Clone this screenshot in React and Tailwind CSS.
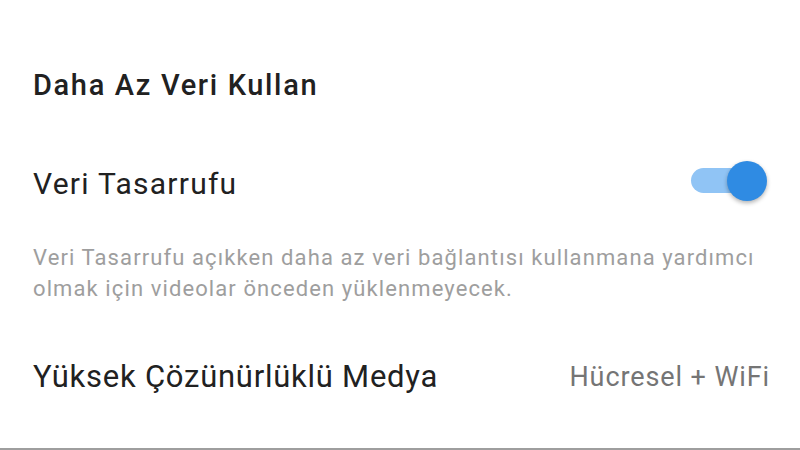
export default function App() {
  return (
    <div className="w-[800px] h-[450px] bg-white overflow-hidden flex flex-col" style={{ fontFamily: 'Roboto, "Noto Sans", sans-serif' }}>
      <div className="pl-[33px] pt-[69px] h-[101px] text-[29px] leading-[32px] font-medium tracking-[1.65px] text-[#212121]">Daha Az Veri Kullan</div>
      <div className="mt-[59px] h-[48px] pl-[33px] pr-[33px] flex items-center justify-between">
        <span className="text-[30px] leading-[32px] tracking-[1.25px] text-[#212121]">Veri Tasarrufu</span>
        <div className="relative w-[76px] h-[44px] mb-[7px] flex items-center">
          <div className="w-[56px] h-[25px] rounded-full bg-[#90c4f5]"></div>
          <div className="absolute right-0 top-[2px] w-[40px] h-[40px] rounded-full bg-[#2f8be3] shadow-[0_2px_4px_rgba(0,0,0,0.3)]"></div>
        </div>
      </div>
      <div className="mt-[34px] pl-[33px] pr-[10px] text-[22px] leading-[31px] tracking-[1.1px] text-[#9e9e9e] whitespace-nowrap">
        Veri Tasarrufu açıkken daha az veri bağlantısı kullanmana yardımcı<br />olmak için videolar önceden yüklenmeyecek.
      </div>
      <div className="mt-[49px] h-[48px] pl-[33px] pr-[30px] flex items-center justify-between">
        <span className="text-[31px] leading-[32px] tracking-[0.75px] text-[#212121]">Yüksek Çözünürlüklü Medya</span>
        <span className="text-[27px] leading-[32px] tracking-[0.9px] text-[#757575]">Hücresel + WiFi</span>
      </div>
      <div className="flex-1"></div>
      <div className="h-[2px] bg-[#9e9e9e]"></div>
    </div>
  );
}
